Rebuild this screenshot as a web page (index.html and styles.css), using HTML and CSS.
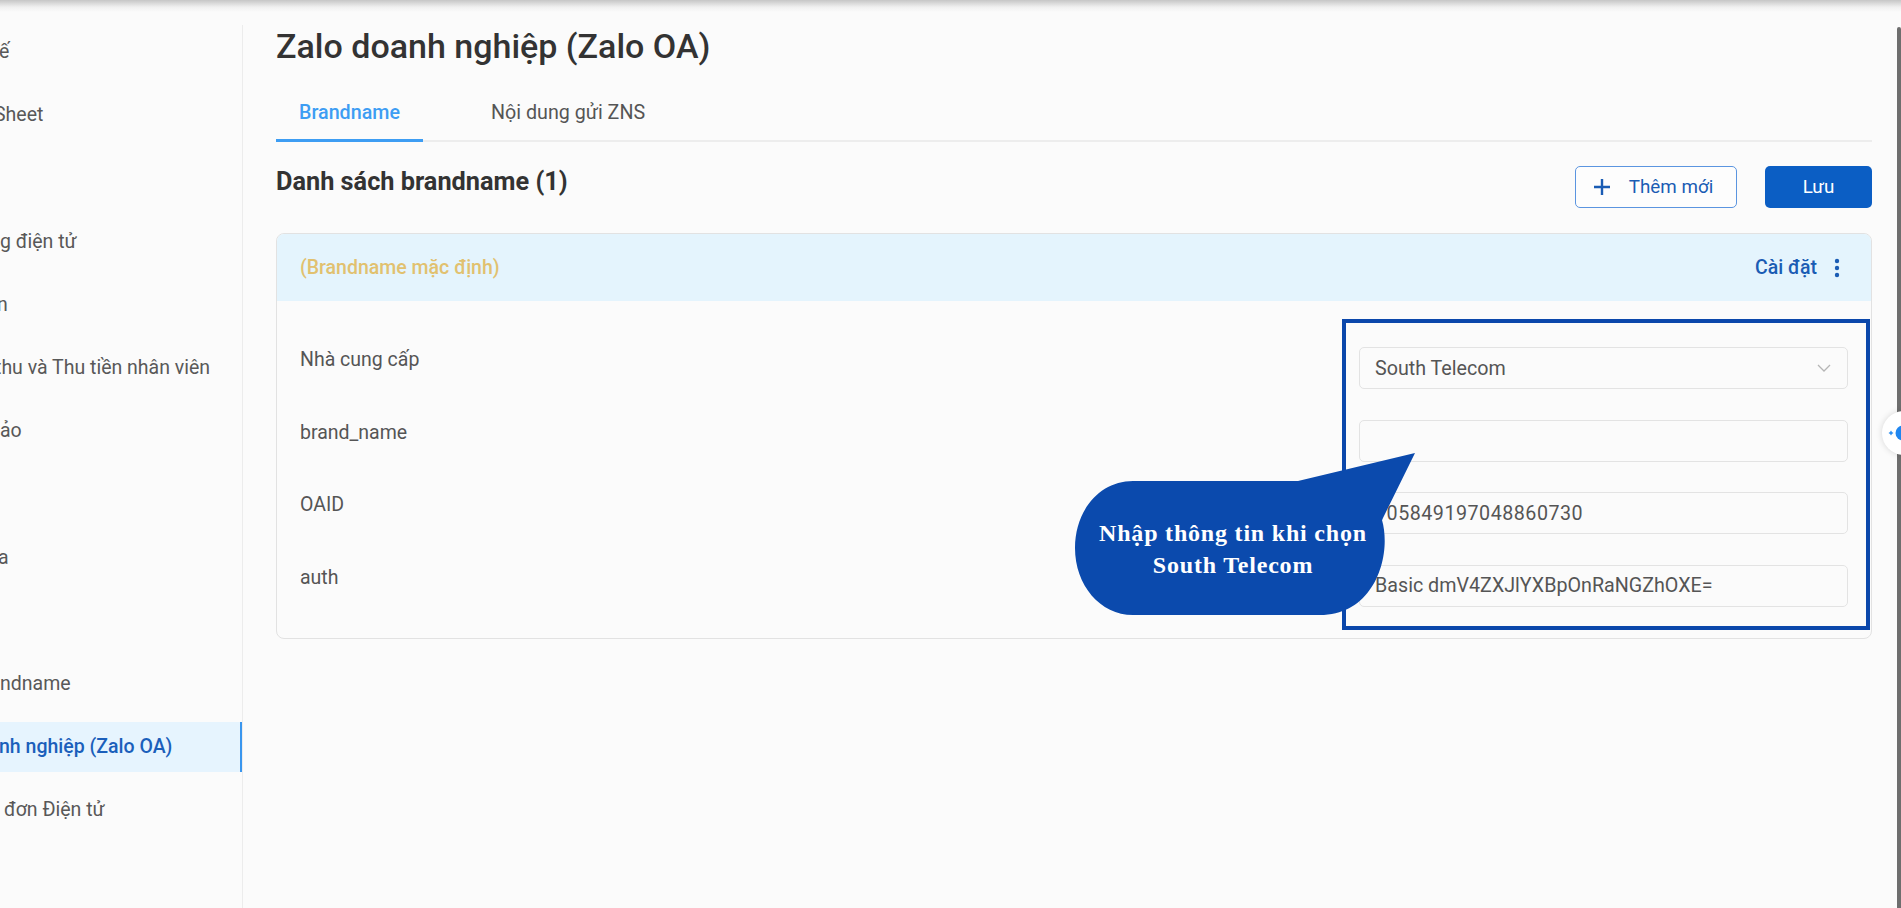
FILE: index.html
```html
<!DOCTYPE html>
<html lang="vi">
<head>
<meta charset="utf-8">
<title>Zalo doanh nghiệp (Zalo OA)</title>
<link rel="stylesheet" href="styles.css">
</head>
<body>
<div class="top-shade"></div>
<div class="app">
  <aside class="sidebar">
    <ul class="nav">
      <li class="nav-item"><span class="clip-1">ế</span></li>
      <li class="nav-item"><span class="clip-6">Sheet</span></li>
      <li class="nav-item"></li>
      <li class="nav-item"><span>g điện tử</span></li>
      <li class="nav-item"><span class="clip-3">n</span></li>
      <li class="nav-item"><span class="clip-4">thu và Thu tiền nhân viên</span></li>
      <li class="nav-item"><span>ảo</span></li>
      <li class="nav-item"></li>
      <li class="nav-item"><span class="clip-2">a</span></li>
      <li class="nav-item"></li>
      <li class="nav-item"><span>ndname</span></li>
      <li class="nav-item active"><span class="clip-1">nh nghiệp (Zalo OA)</span></li>
      <li class="nav-item"><span class="pad-4">đơn Điện tử</span></li>
    </ul>
  </aside>

  <main class="main">
    <h1 class="title">Zalo doanh nghiệp (Zalo OA)</h1>
    <div class="tabs">
      <div class="tab active">Brandname</div>
      <div class="tab">Nội dung gửi ZNS</div>
    </div>

    <div class="section-head">
      <h2 class="section-title">Danh sách brandname (1)</h2>
      <div class="actions">
        <button class="btn btn-outline">
          <svg class="plus" viewBox="0 0 18 18" width="18" height="18"><path d="M9 1v16M1 9h16" stroke="#1a5cb4" stroke-width="2.4" fill="none"/></svg>
          <span>Thêm mới</span>
        </button>
        <button class="btn btn-primary">Lưu</button>
      </div>
    </div>

    <section class="card">
      <header class="card-head">
        <span class="card-name">(Brandname mặc định)</span>
        <div class="card-tools">
          <span class="settings">Cài đặt</span>
          <svg class="kebab" viewBox="0 0 6 20" width="6" height="20"><circle cx="3" cy="3" r="2.2" fill="#1a5cb4"/><circle cx="3" cy="10" r="2.2" fill="#1a5cb4"/><circle cx="3" cy="17" r="2.2" fill="#1a5cb4"/></svg>
        </div>
      </header>
      <div class="card-body">
        <div class="form-row">
          <label class="label">Nhà cung cấp</label>
          <div class="field select">
            <span>South Telecom</span>
            <svg class="chev" viewBox="0 0 14 8" width="14" height="8"><path d="M1 1l6 6 6-6" stroke="#b5b5b5" stroke-width="1.3" fill="none"/></svg>
          </div>
        </div>
        <div class="form-row">
          <label class="label">brand_name</label>
          <div class="field"></div>
        </div>
        <div class="form-row">
          <label class="label">OAID</label>
          <div class="field"><span class="digits">105849197048860730</span></div>
        </div>
        <div class="form-row">
          <label class="label">auth</label>
          <div class="field"><span>Basic dmV4ZXJlYXBpOnRaNGZhOXE=</span></div>
        </div>
      </div>
    </section>
  </main>
  <div class="edge"></div>
</div>

<div class="highlight-box"></div>
<div class="bubble">
  <svg class="bubble-shape" viewBox="0 0 350 170" width="350" height="170"><path d="M63 31 H228 L345 3 L312 70 C322 105 305 165 250 165 H63 C30 165 5 135 5 98 C5 60 30 31 63 31 Z" fill="#0b4aad"/></svg>
  <p class="bubble-text">Nhập thông tin khi chọn<br>South Telecom</p>
</div>
<div class="float-btn">
  <svg viewBox="0 0 44 44" width="44" height="44"><path d="M9 19.5 L10 21 L11.5 22 L10 23 L9 24.5 L8 23 L6.5 22 L8 21 Z" fill="#2e8ff0"/><circle cx="21" cy="22" r="7.5" fill="#1f86f0"/></svg>
</div>
</body>
</html>
```

FILE: styles.css
```css
* { box-sizing: border-box; }
html, body { margin: 0; padding: 0; }
body {
  width: 1901px;
  height: 908px;
  overflow: hidden;
  background: #fbfbfb;
  font-family: Roboto, "Noto Sans", Arial, sans-serif;
  color: #555;
  position: relative;
}
.top-shade {
  position: absolute;
  left: 0; top: 0; right: 0;
  height: 12px;
  background: linear-gradient(#c6c6c6, rgba(228,228,228,0.45) 60%, rgba(251,251,251,0));
  z-index: 5;
}
.app {
  display: flex;
  height: 908px;
}
.sidebar {
  width: 243px;
  flex: none;
  margin-top: 25px;
  padding-top: 2px;
  border-right: 1px solid #ececec;
  overflow: hidden;
}
.nav {
  list-style: none;
  margin: 0;
  padding: 0;
  display: flex;
  flex-direction: column;
  gap: 13.2px;
}
.nav-item {
  height: 50px;
  line-height: 50px;
  font-size: 19.5px;
  color: #585858;
  white-space: nowrap;
  overflow: hidden;
}
.nav-item span { display: inline-block; }
.clip-1 { margin-left: -1px; }
.clip-2 { margin-left: -2px; }
.clip-3 { margin-left: -3px; }
.clip-4 { margin-left: -5px; }
.clip-6 { margin-left: -6px; }
.pad-4 { margin-left: 4px; }
.nav-item.active {
  background: #e6f4fe;
  color: #1b5fbb;
  font-weight: 500;
  border-right: 3px solid #3a96ee;
  margin-right: -1px;
}

.main {
  flex: 1;
  padding: 26px 25px 0 33px;
  min-width: 0;
}
.title {
  margin: 0;
  font-size: 34px;
  line-height: 40px;
  font-weight: 500;
  color: #333;
}
.tabs {
  margin-top: 18px;
  display: flex;
  gap: 45px;
  border-bottom: 2px solid #ededed;
}
.tab {
  padding: 17px 23px 14px;
  font-size: 19.7px;
  line-height: 24px;
  color: #555;
  margin-bottom: -2px;
  border-bottom: 3px solid transparent;
}
.tab.active {
  color: #3d9df3;
  font-weight: 500;
  border-bottom-color: #3d9df3;
}

.section-head {
  margin-top: 24px;
  display: flex;
  justify-content: space-between;
  align-items: flex-start;
}
.section-title {
  margin: 0;
  font-size: 25.3px;
  line-height: 32px;
  font-weight: 700;
  color: #333;
}
.actions {
  display: flex;
  gap: 28px;
}
.btn {
  height: 42px;
  border-radius: 5px;
  font-family: Roboto, Arial, sans-serif;
  font-size: 18.8px;
  display: flex;
  align-items: center;
  justify-content: center;
  padding: 0;
}
.btn-outline {
  width: 162px;
  border: 1px solid #5b95e0;
  background: #fdfdfd;
  color: #1a5cb4;
  gap: 18px;
  padding-right: 6px;
}
.btn-primary {
  width: 107px;
  border: none;
  background: #0b5ec4;
  color: #fff;
}

.card {
  margin-top: 25px;
  border: 1px solid #e2e2e2;
  border-radius: 8px;
  overflow: hidden;
}
.card-head {
  height: 67px;
  background: #e4f4fd;
  display: flex;
  align-items: center;
  justify-content: space-between;
  padding: 0 31px 0 23px;
}
.card-name {
  font-size: 19.5px;
  font-weight: 500;
  color: #e1c16f;
}
.card-tools {
  display: flex;
  align-items: center;
  gap: 17px;
}
.settings {
  font-size: 19.5px;
  font-weight: 500;
  color: #1a5cb4;
}
.card-body {
  padding: 46px 23px 31px 23px;
  display: flex;
  flex-direction: column;
  gap: 30.5px;
}
.form-row {
  display: grid;
  grid-template-columns: 1fr 489px;
  align-items: start;
}
.label {
  font-size: 19.5px;
  line-height: 26px;
  color: #555;
}
.field {
  height: 42px;
  border: 1px solid #e3e3e3;
  border-radius: 5px;
  background: #fbfbfb;
  display: flex;
  align-items: center;
  justify-content: space-between;
  padding: 0 16px 0 15px;
  font-size: 19.7px;
  color: #555;
}
.digits { letter-spacing: 0.5px; }

.edge {
  width: 4px;
  flex: none;
  margin-top: 27px;
  background: #6e6e6e;
  border-radius: 2px 2px 0 0;
}

.highlight-box {
  position: absolute;
  left: 1342px;
  top: 319px;
  width: 528px;
  height: 311px;
  border: 4px solid #0b47ab;
  z-index: 6;
}
.bubble {
  position: absolute;
  left: 1070px;
  top: 450px;
  width: 350px;
  height: 170px;
  z-index: 7;
}
.bubble-shape { display: block; }
.bubble-text {
  position: absolute;
  left: 5px;
  top: 67px;
  width: 316px;
  margin: 0;
  text-align: center;
  font-family: "Liberation Serif", "DejaVu Serif", serif;
  font-weight: 700;
  font-size: 24px;
  line-height: 32px;
  letter-spacing: 0.8px;
  color: #fff;
}
.float-btn {
  position: absolute;
  left: 1882px;
  top: 411px;
  width: 44px;
  height: 44px;
  border-radius: 50%;
  background: #fff;
  box-shadow: 0 0 6px rgba(0,0,0,0.15);
  z-index: 8;
}
.float-btn svg { display: block; }
```
